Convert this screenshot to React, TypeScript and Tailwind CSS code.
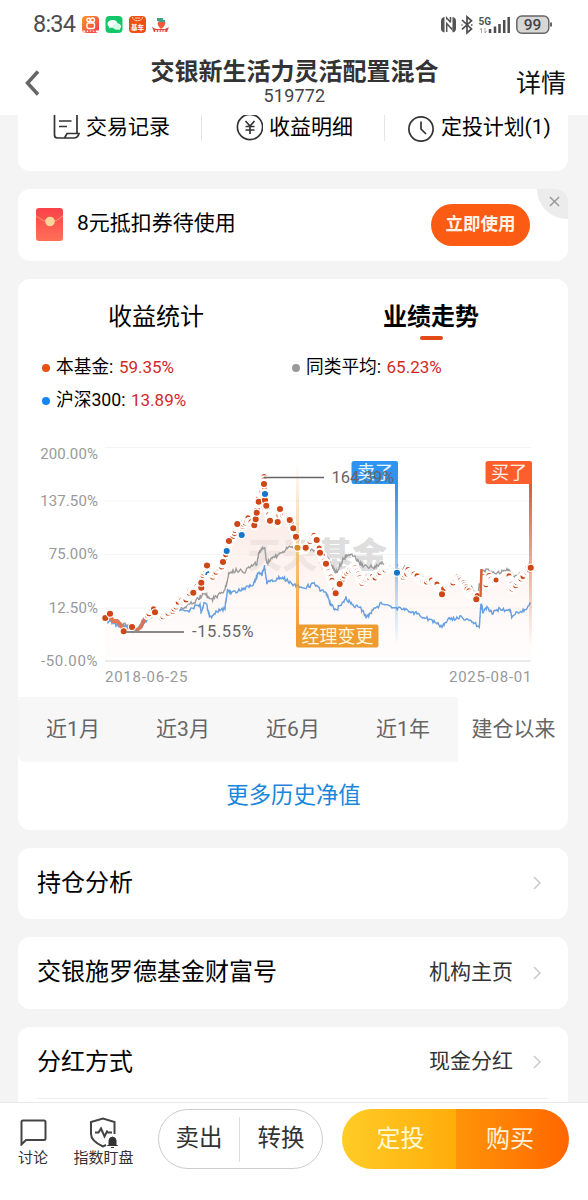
import React from 'react';

type Point = [number, number];

const FUND_TREND: Point[] = [
  [105, 618], [110, 613.7], [113, 619], [118, 623], [121, 622], [123.7, 631.3], [132, 627], [137, 631], [142, 624], [146, 616],
  [149, 613], [152, 609], [155, 612], [160, 618], [163, 617], [168, 613], [172, 611], [176, 606], [179, 599], [183, 602], [188, 596],
  [190, 591], [193.3, 592.7], [197, 586], [201.3, 587.7], [201.3, 580], [203, 574], [207, 565.7], [209, 577], [212, 578],
  [216, 571], [221, 567], [223, 562], [226.7, 551], [229, 541], [234, 534], [237.3, 524], [241, 531], [244, 523], [248, 519],
  [251, 523], [254.3, 525.3], [256.7, 512.7], [258, 497], [262, 490], [264, 478], [265, 500.3], [268, 513], [270, 520.7],
  [274, 512], [277, 522], [280, 509], [283, 517], [286.7, 515], [289.7, 520], [293.3, 528.3], [296, 536.7], [298, 547.7],
  [302, 551], [305.7, 547.7], [310, 541], [314, 535.7], [316.7, 540], [320, 552.7], [326, 563.7], [330, 574], [333, 584],
  [335.7, 593.3], [339.7, 584], [345, 573], [350, 570], [355, 568], [359, 577], [362, 583], [368, 577], [374, 578],
  [380, 572], [387, 569], [393, 568], [397, 570], [402, 577], [408, 571], [414, 575], [420, 579], [423, 582], [430, 580],
  [436, 584], [442, 592], [446, 585], [452, 583], [457, 577], [463, 582], [467, 590], [471, 595], [476.3, 599.3],
  [480, 587], [483, 577], [486, 584], [489, 576], [493, 582], [499, 578], [508, 575], [511, 580], [512, 588], [517, 583],
  [523, 575], [527, 572], [530.7, 567.7],
];

const AVERAGE_TREND: Point[] = [
  [105, 618], [112, 620], [120, 624], [126, 625], [133, 628], [138, 630], [146, 616], [152, 612], [160, 617], [170, 612],
  [180, 608], [190, 604], [197, 600], [205, 593], [210, 601], [225, 590], [229, 573], [237, 570], [245, 571], [257, 563],
  [259, 552], [264.3, 547], [267, 563], [273, 558], [282, 552], [292, 545], [299, 549], [308, 549], [316, 550], [325, 555],
  [330, 561], [335.7, 573], [343, 560], [346.7, 555], [355, 557], [362, 565], [370, 567], [375, 568], [382, 562],
  [393, 567], [407, 568], [415, 574], [427, 579], [435, 583], [442, 592], [457, 577], [470, 587], [478, 594],
  [481, 571], [486, 570], [492, 573], [503, 572], [508, 569], [513, 577], [523, 573], [530.7, 563],
];

const INDEX_TREND: Point[] = [
  [105, 619], [110, 622], [118, 625], [127, 627], [136, 632], [146, 620], [156, 613], [170, 612], [180, 609], [188, 611],
  [197, 606], [200, 604], [201, 613], [204, 604], [207, 606], [210, 618], [215, 613], [225, 608], [227.7, 589], [231, 593],
  [240, 590], [253, 585], [258, 573], [262, 575], [264.3, 566], [267, 583], [274, 580], [281.7, 577], [290, 583],
  [297, 586], [306, 587], [314, 584], [321, 590], [326, 593], [330, 603], [335.7, 611], [346, 598], [353, 605],
  [360, 607], [366.7, 618], [372, 611], [381, 604], [393, 607], [407, 610], [420, 615], [430, 620], [442, 626],
  [447, 620], [460, 617], [472, 622], [479.3, 627], [481, 603], [483, 612], [487, 607], [492, 613], [499, 609],
  [510, 610], [511.7, 617], [516, 612], [523, 611], [530.7, 604],
];

const BUYS: Point[] = [
  [105.3, 618], [110, 613.7], [123.7, 631.3], [132, 627], [155, 612.3], [193.3, 592.7], [201.3, 587.7], [201.3, 582.7],
  [207, 565.5], [223, 562], [229, 541], [237.3, 524], [254.3, 525.3], [255.7, 519.3], [256.7, 512.7], [258.7, 501.7],
  [264, 484], [265, 500.3], [266.3, 505.7], [270, 520.7], [277.7, 522], [280, 509], [289.7, 520], [293.3, 528.3],
  [296, 536.7], [305.7, 547.7], [316.7, 540], [320, 552.7], [326, 563.7], [335.7, 593.3], [339.7, 584],
  [442, 594.3], [476.3, 599.3], [530.7, 567.7],
];
const SELLS: Point[] = [[226.7, 551], [241.7, 535], [265, 494], [397, 572.7]];

const GRID = [
  { y: 447.5, label: '200.00%', labelY: 458.5 },
  { y: 501, label: '137.50%', labelY: 505.5 },
  { y: 554.5, label: '75.00%', labelY: 559 },
  { y: 608, label: '12.50%', labelY: 612.5 },
  { y: 661, label: '-50.00%', labelY: 666 },
];

const walk = (points: Point[], step: number, noise: number, seed: number): Point[] => {
  let s = seed;
  const random = () => {
    s = (s * 16807) % 2147483647;
    return s / 2147483647 - 0.5;
  };
  const out: Point[] = [];
  for (let i = 0; i < points.length - 1; i++) {
    const [x1, y1] = points[i];
    const [x2, y2] = points[i + 1];
    const count = Math.max(1, Math.round(Math.hypot(x2 - x1, y2 - y1) / step));
    for (let k = 0; k < count; k++) {
      const t = k / count;
      out.push([x1 + (x2 - x1) * t, y1 + (y2 - y1) * t + random() * noise]);
    }
  }
  out.push(points[points.length - 1]);
  return out;
};

const toLine = (points: Point[]) => points.map(([x, y]) => `${x.toFixed(1)},${y.toFixed(1)}`).join(' ');

const averageLine = toLine(walk(AVERAGE_TREND, 1.1, 4.5, 77));
const indexLine = toLine(walk(INDEX_TREND, 1.1, 4, 1234));
const smallTrades = walk(FUND_TREND, 1.7, 3.5, 991).filter(
  ([x]) => x > 147 && !(x > 444 && x < 447) && !(x > 477.5 && x < 482.5) && !(x > 497 && x < 507)
);

const Chart: React.FC = () => (
  <svg className="block h-[250px] w-[550px]" viewBox="18 440 550 250" fontFamily="Roboto, 'Noto Sans CJK SC', sans-serif">
    <defs>
      <linearGradient id="area" x1="0" y1="480" x2="0" y2="655" gradientUnits="userSpaceOnUse">
        <stop offset="0" stopColor="#f9e0d8" stopOpacity="0.85" />
        <stop offset="1" stopColor="#fff8f5" stopOpacity="0.3" />
      </linearGradient>
      <linearGradient id="sellPole" x1="0" y1="484" x2="0" y2="646" gradientUnits="userSpaceOnUse">
        <stop offset="0" stopColor="#2f93ee" />
        <stop offset="1" stopColor="#2f93ee" stopOpacity="0" />
      </linearGradient>
      <linearGradient id="buyPole" x1="0" y1="484" x2="0" y2="646" gradientUnits="userSpaceOnUse">
        <stop offset="0" stopColor="#dd5c34" />
        <stop offset="1" stopColor="#dd5c34" stopOpacity="0" />
      </linearGradient>
      <linearGradient id="managerPole" x1="0" y1="462" x2="0" y2="630" gradientUnits="userSpaceOnUse">
        <stop offset="0" stopColor="#f39c2d" stopOpacity="0" />
        <stop offset="1" stopColor="#f39c2d" />
      </linearGradient>
    </defs>

    {GRID.map(({ y, label, labelY }, i) => (
      <g key={label}>
        <line x1="105" x2="531" y1={y} y2={y} stroke={i === 4 ? '#d8d8d8' : '#f4f4f4'} />
        <text x={label[0] === '-' ? 41 : 98} y={labelY} textAnchor={label[0] === '-' ? 'start' : 'end'} fontSize="15" letterSpacing={label[0] === '-' ? 0.6 : 0.1} fill="#999">{label}</text>
      </g>
    ))}

    <text x="247" y="568" fontSize="35" fontWeight="900" fill="#dedede" fontFamily="'Noto Sans CJK SC', sans-serif">天天基金</text>
    <polygon points={`105,658 ${toLine(FUND_TREND)} 531,658`} fill="url(#area)" />

    <polyline points={averageLine} fill="none" stroke="#999" strokeWidth="1.3" />
    <polyline points={indexLine} fill="none" stroke="#659fe2" strokeWidth="1.4" />
    <polyline points="110,616 113,621 117,621 121,625 123,629" fill="none" stroke="#e17853" strokeWidth="4" />
    <polyline points="136,631 141,627 146,616" fill="none" stroke="#d97454" strokeWidth="3.5" />

    <g fill="#cd4717" stroke="#fff" strokeWidth="2">
      {smallTrades.map(([x, y], i) => <circle key={i} cx={x} cy={y} r="3.5" />)}
    </g>
    <line x1="481.5" x2="480.5" y1="569" y2="597" stroke="#dd6038" strokeWidth="2.5" />

    <rect x="296" y="462" width="3" height="164" fill="url(#managerPole)" />
    <rect x="395" y="483" width="3" height="163" fill="url(#sellPole)" />
    <rect x="529" y="483" width="3" height="163" fill="url(#buyPole)" />

    <g fill="#cd4717" stroke="#fff" strokeWidth="1.1">
      {BUYS.map(([x, y]) => <circle key={`${x}-${y}`} cx={x} cy={y} r="3.6" />)}
    </g>
    <g fill="#1674c9" stroke="#fff" strokeWidth="1.1">
      {SELLS.map(([x, y]) => <circle key={x} cx={x} cy={y} r="3.6" />)}
    </g>
    <circle cx="297.5" cy="547.7" r="3.6" fill="#d88c26" stroke="#fff" strokeWidth="1.1" />
    <path d="M206 575q0-3 3-3" fill="none" stroke="#1674c9" strokeWidth="1.6" />

    <path d="M354 461h42a2 2 0 0 1 2 2v21h-44a2.5 2.5 0 0 1-2.5-2.5v-18A2.5 2.5 0 0 1 354 461z" fill="#2f93f2" />
    <text x="357" y="479" fontSize="18" fill="#e9f5ff">卖了</text>
    <path d="M488 461h42a2 2 0 0 1 2 2v21h-44a2.5 2.5 0 0 1-2.5-2.5v-18A2.5 2.5 0 0 1 488 461z" fill="#fc5f2c" />
    <text x="491" y="479" fontSize="18" fill="#fff0e8">买了</text>
    <path d="M296 624.5h80.5a2 2 0 0 1 2 2v19a2 2 0 0 1-2 2H298a2 2 0 0 1-2-2z" fill="#ee9b30" />
    <text x="301.5" y="642.5" fontSize="18" fill="#fff6dd">经理变更</text>

    <line x1="264" x2="324" y1="477.5" y2="477.5" stroke="#666" strokeWidth="1.4" />
    <text x="331.5" y="483" fontSize="16.5" fill="#666">164.39%</text>
    <line x1="126" x2="184" y1="632" y2="632" stroke="#888" strokeWidth="1.8" />
    <text x="192" y="637" fontSize="16.5" letterSpacing="0.6" fill="#666">-15.55%</text>

    <text x="105" y="681.5" fontSize="15" letterSpacing="0.75" fill="#999">2018-06-25</text>
    <text x="449" y="681.5" fontSize="15" letterSpacing="0.75" fill="#999">2025-08-01</text>
  </svg>
);

const StatusBar: React.FC = () => (
  <div className="flex h-[50px] items-center justify-between pl-[33px] pr-[35px] text-[#4d4d4d]">
    <div className="flex items-center">
      <span className="w-[49px] text-[23.5px] leading-none tracking-[-0.8px]">8:34</span>
      <svg className="h-[18px] w-[90px]" viewBox="0 0 90 18">
        <defs>
          <linearGradient id="appRed" x1="0" y1="0" x2="1" y2="1">
            <stop offset="0" stopColor="#ff9a20" />
            <stop offset="1" stopColor="#f0324a" />
          </linearGradient>
        </defs>
        <rect width="17" height="17" rx="4" fill="url(#appRed)" />
        <g fill="none" stroke="#fff" strokeWidth="1.4">
          <circle cx="6.5" cy="4" r="1.7" />
          <circle cx="10.5" cy="4" r="2" />
          <rect x="5" y="7" width="7.5" height="5.5" rx="1.5" />
        </g>
        <path d="M1 14.5h16v2l-8-1-7 1z" fill="#fff" />
        <path d="M3 15h12" stroke="#e64a3c" strokeWidth="1.3" strokeDasharray="2 1" />
        <rect x="23.5" width="17" height="17" rx="4" fill="#12c768" />
        <path d="M30.5 4c-3 0-5 1.8-5 3.8 0 1.3.7 2.300 1.8 3l-.4 1.7 2-1 1.6.2c3 0 5-1.7 5-3.9S33.5 4 30.5 4z" fill="#fff" />
        <path d="M35 7.2c-2.500 0-4.300 1.500-4.300 3.300s1.800 3.300 4.300 3.300l1.300-.2 1.700.8-.4-1.500c1-.6 1.500-1.500 1.500-2.400 0-1.800-1.700-3.300-4.100-3.300z" fill="#d8fbe8" />
        <rect x="47" width="17" height="17" rx="4" fill="#ee4f12" />
        <path d="M50.5 1c0 5 10 5 10 0M53 2h5" fill="none" stroke="#ffd2b5" />
        <text x="49" y="13.5" fontSize="6.5" fontWeight="700" fill="#fff" fontFamily="'Noto Sans CJK SC', sans-serif">基车</text>
        <path d="M76 6l7-1c1 3-1 6-4 8-2-2-4-4-3-7z" fill="#ef5a3a" />
        <path d="M75 5V2h6v2h2v2h-5z" fill="#43a180" />
        <path d="M70 11l4 2h9l4-2-2 5H72z" fill="#e4473b" />
        <path d="M73 15h11" stroke="#fff" strokeWidth="1.5" strokeDasharray="2 .8" />
      </svg>
    </div>
    <svg className="h-[20px] w-[113px]" viewBox="440 15 113 20">
      <path d="M444.5 17q-3.500.5-3.500 4v7.500q0 3.500 3.500 4zM452.500 32.500q3.500-.5 3.500-4V21q0-3.500-3.500-4z" fill="#555" />
      <path d="M446.700 32v-8.500l5 5.500v-1.500M446.700 19.500v-1.500l4 4.500v0M450.500 17v5" fill="none" stroke="#555" strokeWidth="1.500" />
      <path d="M462 20l9.500 9-4.500 3.800V16.800l4.500 4-9.500 8.500M461.500 25h1M471 25h1.500" fill="none" stroke="#4d4d4d" strokeWidth="1.700" />
      <text x="478.500" y="24.500" fontSize="10" fontWeight="700" fill="#555" fontFamily="Roboto, sans-serif">5G</text>
      <path d="M481.500 28v5m-1.500-3l1.500-2M485 28v5m0 0l1.500-2" fill="none" stroke="#aaa" />
      <path d="M490 29v4M495 26.500V33M499.500 24v9M504.200 20v13M508.700 17v16" stroke="#4d4d4d" strokeWidth="2.500" />
      <rect x="516.800" y="16" width="32" height="17.200" rx="5" fill="#d7d7d7" stroke="#666" strokeWidth="1.500" />
      <path d="M551 22.500v4" stroke="#666" strokeWidth="2" />
      <text x="532.500" y="30" textAnchor="middle" fontSize="15.500" fontWeight="500" fill="#444" fontFamily="Roboto, sans-serif">99</text>
    </svg>
  </div>
);

const Header: React.FC = () => (
  <header className="h-[115px] shrink-0 bg-white">
    <StatusBar />
    <div className="flex h-[65px] pl-[25px] pr-[22px]">
      <svg className="mt-5 h-[26px] w-[47px]" viewBox="0 0 47 26" fill="none" stroke="#666" strokeWidth="3.5">
        <path d="M13 1.500L2.500 13L13 24.500" />
      </svg>
      <div className="flex flex-1 flex-col items-center pl-[1px] pt-[10px]">
        <h1 className="text-[24px] font-bold leading-[24px] text-[#333]">交银新生活力灵活配置混合</h1>
        <p className="mt-[3px] text-[18px] leading-[18px] tracking-[0.2px] text-[#444]">519772</p>
      </div>
      <span className="mt-[21px] text-[25px] leading-[26px] text-[#111]">详情</span>
    </div>
  </header>
);

const QuickLinks: React.FC = () => (
  <section className="flex h-[56px] shrink-0 items-start overflow-hidden rounded-b-xl bg-white text-[21px] leading-[24px] text-black">
    <div className="flex w-[183px] pl-[35px]">
      <svg className="mr-[6px] h-[25px] w-[27px]" viewBox="0 0 27 25" fill="none" stroke="#333" strokeWidth="1.7">
        <path d="M1.500 0v20q0 3 3 3h17q3.500-.5 4.500-4.500H14l-2.500 4.500M24 0v18M6 6h12.500M6 11.500h8" />
      </svg>
      交易记录
    </div>
    <div className="flex h-[26px] w-[184px] border-x border-[#e5e5e5] pl-[34px]">
      <svg className="-mt-px mr-[6px] h-[27px] w-[27px]" viewBox="0 0 27 27" fill="none" stroke="#333" strokeWidth="1.7">
        <circle cx="14" cy="13" r="12.6" />
        <path d="M9.500 7l4.500 5L18.500 7M14 12v8M9.500 12.500h9M9.500 16h9" />
      </svg>
      收益明细
    </div>
    <div className="flex pl-[23px]">
      <svg className="mr-[7px] mt-px h-[26px] w-[26px]" viewBox="0 0 26 26" fill="none" stroke="#333" strokeWidth="1.7">
        <circle cx="13" cy="13" r="12.1" />
        <path d="M13 5.500V13l5 5" />
      </svg>
      <span className="tracking-[-0.1px]">定投计划(1)</span>
    </div>
  </section>
);

const Coupon: React.FC = () => (
  <section className="relative flex h-[71.5px] shrink-0 items-center overflow-hidden rounded-xl bg-white pl-[18px] pr-[38px]">
    <svg className="h-[33px] w-[27px]" viewBox="0 0 27 33">
      <defs>
        <linearGradient id="envelope" x1="0" y1="0" x2="0" y2="1">
          <stop offset="0" stopColor="#fb4249" />
          <stop offset="1" stopColor="#ff7059" />
        </linearGradient>
      </defs>
      <rect width="27" height="33" rx="3" fill="url(#envelope)" />
      <path d="M0 8q14 12 27 0" fill="none" stroke="#ff9a75" />
      <circle cx="14" cy="13.5" r="4.8" fill="#fdd49a" />
    </svg>
    <span className="mb-[2px] ml-[14px] text-[21px] leading-none text-black">8元抵扣券待使用</span>
    <button className="ml-auto h-[42px] w-[99px] rounded-full bg-[#fb5b13] pb-px text-[17.5px] font-bold text-[#fff3e6]">立即使用</button>
    <div className="absolute right-0 top-0 h-[30px] w-[31px] rounded-bl-full bg-[#ececec]">
      <svg className="ml-[12px] mt-[7px] h-[11px] w-[11px]" viewBox="0 0 12 12" stroke="#999" strokeWidth="1.6">
        <path d="M1 1l10 10M11 1L1 11" />
      </svg>
    </div>
  </section>
);

interface LegendProps {
  dot: string;
  label: string;
  value: string;
}

const Legend: React.FC<LegendProps> = ({ dot, label, value }) => (
  <div className="flex h-[33px] w-[250px] items-center text-[17.7px] text-black">
    <span className={`mr-[6px] h-2 w-2 rounded-full ${dot}`} />
    {label}:
    <span className="ml-[5.5px] text-[17px] text-[#d02a2a]">{value}</span>
  </div>
);

const PERIODS = ['近1月', '近3月', '近6月', '近1年'];

const Performance: React.FC = () => (
  <section className="flex h-[551px] shrink-0 flex-col rounded-xl bg-white">
    <div className="flex h-[72.5px] text-[24px] leading-[24px] text-black">
      <div className="flex w-[275px] justify-center pl-px pt-[26px]">收益统计</div>
      <div className="flex w-[275px] flex-col items-center pl-px pt-[26px] font-bold">
        业绩走势
        <span className="mt-[7px] h-1 w-[23px] rounded-full bg-[#e34a17]" />
      </div>
    </div>
    <div className="flex h-[89px] flex-wrap content-start pl-[24px]">
      <Legend dot="bg-[#e9510f]" label="本基金" value="59.35%" />
      <Legend dot="bg-[#999]" label="同类平均" value="65.23%" />
      <Legend dot="bg-[#1486ee]" label="沪深300" value="13.89%" />
    </div>
    <Chart />
    <div className="mt-[7px] flex h-[65px] shrink-0 text-[21px] text-[#666]">
      <div className="flex w-[440px] rounded-bl-lg bg-[#f7f7f7]">
        {PERIODS.map((period) => (
          <button key={period} className="w-[110px]">{period}</button>
        ))}
      </div>
      <button className="flex-1 pl-px">建仓以来</button>
    </div>
    <button className="flex-1 pl-px pt-px text-[22.4px] text-[#1a86dc]">更多历史净值</button>
  </section>
);

interface RowProps {
  title: string;
  value?: string;
}

const Row: React.FC<RowProps> = ({ title, value }) => (
  <section className="flex h-[71.5px] shrink-0 items-center rounded-xl bg-white pb-px pl-[19px] pr-[26px]">
    <span className="flex-1 text-[24px] leading-none text-black">{title}</span>
    <span className="text-[21px] leading-none text-[#333]">{value}</span>
    <svg className="ml-[19px] mt-px h-[14px] w-[10px]" viewBox="0 0 10 14" fill="none" stroke="#ccc" strokeWidth="1.6">
      <path d="M2 1l6 6-6 6" />
    </svg>
  </section>
);

const BottomBar: React.FC = () => (
  <footer className="flex h-[98px] shrink-0 border-t border-[#e9e9e9] bg-white pt-[6px] text-[#333]">
    <div className="flex w-[66px] flex-col items-center pt-[10px] text-[15px] leading-[18px]">
      <svg className="mb-[3px] h-[27px] w-[27px]" viewBox="0 0 27 27" fill="none" stroke="#444" strokeWidth="2">
        <path d="M1.500 25.500V3q0-1.500 1.500-1.500h21q1.500 0 1.500 1.500v16.500q0 1.500-1.500 1.500H6z" />
      </svg>
      讨论
    </div>
    <div className="flex w-[75px] flex-col items-center pt-[8px] text-[15px] leading-[18px]">
      <svg className="mb-px h-[31px] w-[29px]" viewBox="0 0 29 31" fill="none" stroke="#444" strokeWidth="2">
        <path d="M25.500 17V5L14 1.500 2 5v12q0 7 12 12.500l3-1.500" />
        <path d="M6 15.500h3.500l2.500-4 3.500 8 2.500-5 1 1h4" />
        <path d="M20 28.500v-5q0-3 3.500-3.500 3.500.5 3.500 3.500v5h1.500H18.500zM22 30.500h3" fill="#333" stroke="#333" strokeWidth="1" />
      </svg>
      指数盯盘
    </div>
    <div className="ml-[17px] flex h-[60px] w-[165px] items-center rounded-full border border-[#ccc] text-[23.5px]">
      <button className="h-[45px] w-[81px] border-r border-[#ddd]">卖出</button>
      <button className="flex-1">转换</button>
    </div>
    <div className="ml-[19px] flex h-[60px] w-[227px] overflow-hidden rounded-full text-[24px]">
      <button className="w-[114px] bg-linear-to-r from-[#ffcc25] to-[#ffad08] pl-[3px] text-[#fff8d5]">定投</button>
      <button className="flex-1 bg-linear-to-r from-[#ff9408] to-[#ff6600] pr-[5px] text-[#fff3dc]">购买</button>
    </div>
  </footer>
);

const App: React.FC = () => {
  return (
    <div className="flex h-[1200px] w-[588px] flex-col overflow-hidden bg-[#f4f4f4] font-[Roboto,'Noto_Sans_CJK_SC',sans-serif]">
      <Header />
      <main className="flex min-h-0 flex-1 flex-col gap-[18px] overflow-hidden pl-[18px] pr-[20px]">
        <QuickLinks />
        <Coupon />
        <Performance />
        <Row title="持仓分析" />
        <Row title="交银施罗德基金财富号" value="机构主页" />
        <div className="shrink-0 rounded-t-xl bg-white">
          <Row title="分红方式" value="现金分红" />
          <div className="mx-[19px] h-5 border-t border-[#eee]" />
        </div>
      </main>
      <BottomBar />
    </div>
  );
};

export default App;
